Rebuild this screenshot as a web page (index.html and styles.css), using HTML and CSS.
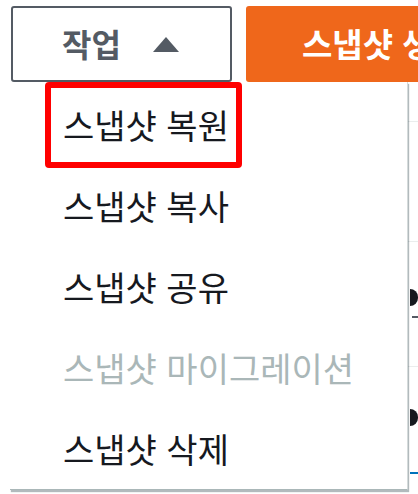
FILE: index.html
```
<!DOCTYPE html>
<html lang="ko">
<head>
<meta charset="utf-8">
<link rel="stylesheet" href="styles.css">
</head>
<body>
<div class="page">
  <div class="toolbar">
    <button class="btn-actions">작업<span class="caret"></span></button>
    <button class="btn-primary">스냅샷 생성</button>
  </div>
  <div class="content">
    <div class="row r1"></div>
    <div class="row r2"></div>
    <div class="row r3"><span class="blob b1"></span><span class="dash"></span></div>
    <div class="row r4"><span class="blob b2"></span></div>
    <div class="row r5"><span class="blue"></span></div>
  </div>
  <ul class="menu">
    <li class="item">스냅샷 복원</li>
    <li class="item">스냅샷 복사</li>
    <li class="item">스냅샷 공유</li>
    <li class="item disabled">스냅샷 마이그레이션</li>
    <li class="item">스냅샷 삭제</li>
  </ul>
  <div class="highlight"></div>
</div>
</body>
</html>
```
FILE: styles.css
```
html, body {
  margin: 0;
  padding: 0;
  background: #ffffff;
}
body {
  font-family: "Noto Sans CJK KR", "Noto Sans", sans-serif;
  width: 418px;
  height: 494px;
  overflow: hidden;
}
.page {
  position: relative;
  width: 418px;
  height: 494px;
  overflow: hidden;
}
.toolbar {
  display: flex;
  gap: 14px;
  padding: 6px 0 0 11px;
  height: 76px;
}
.btn-actions {
  flex-shrink: 0;
  box-sizing: border-box;
  width: 221px;
  height: 76px;
  border: 2px solid #545b64;
  border-radius: 3px;
  background: #ffffff;
  color: #545b64;
  font-family: inherit;
  font-size: 32px;
  font-weight: 700;
  display: flex;
  align-items: center;
  padding: 0 0 2px 49px;
  gap: 32px;
}
.caret {
  width: 0;
  height: 0;
  margin-top: 2px;
  border-left: 13.5px solid transparent;
  border-right: 13.5px solid transparent;
  border-bottom: 15px solid #545b64;
}
.btn-primary {
  flex-shrink: 0;
  box-sizing: border-box;
  width: 240px;
  height: 76px;
  border: none;
  border-radius: 3px;
  background: #ef671b;
  color: #ffffff;
  font-family: inherit;
  font-size: 33px;
  font-weight: 700;
  text-align: left;
  padding: 0 0 2px 56px;
  white-space: nowrap;
}
.content {
  display: flex;
  flex-direction: column;
  padding-left: 14px;
}
.row {
  position: relative;
  border-bottom: 1px solid #eaeded;
}
.r1 { height: 39px; }
.r2 { height: 119px; }
.r3 { height: 124px; }
.r4 { height: 105px; border-bottom: none; }
.r5 { height: 20px; border-bottom: none; }
.blob {
  position: absolute;
  right: 0;
  width: 8px;
  height: 17px;
  background: #16191f;
  border-radius: 0 9px 9px 0;
}
.b1 { top: 47px; }
.b2 { top: 42px; }
.dash {
  position: absolute;
  right: 0;
  top: 74px;
  width: 6px;
  height: 2px;
  background: #545b64;
}
.blue {
  position: absolute;
  right: 0;
  top: 0;
  width: 8px;
  height: 2px;
  background: #0073bb;
}
.menu {
  position: absolute;
  left: 10px;
  top: 82px;
  width: 398px;
  height: 408px;
  margin: 0;
  padding: 2px 0 0 0;
  list-style: none;
  background: #ffffff;
  border-right: 1px solid #d5dbdb;
  border-bottom: 1px solid #aab7b8;
  box-shadow: 1px 2px 1px rgba(0, 28, 36, 0.3);
  box-sizing: border-box;
}
.item {
  height: 81px;
  display: flex;
  align-items: center;
  padding-left: 53px;
  font-size: 34px;
  font-weight: 400;
  color: #16191f;
  white-space: nowrap;
}
.item.disabled {
  color: #aab7b8;
}
.highlight {
  position: absolute;
  left: 45px;
  top: 82px;
  width: 197px;
  height: 86px;
  box-sizing: border-box;
  border: 6px solid #ff0000;
  border-radius: 4px;
}
```
